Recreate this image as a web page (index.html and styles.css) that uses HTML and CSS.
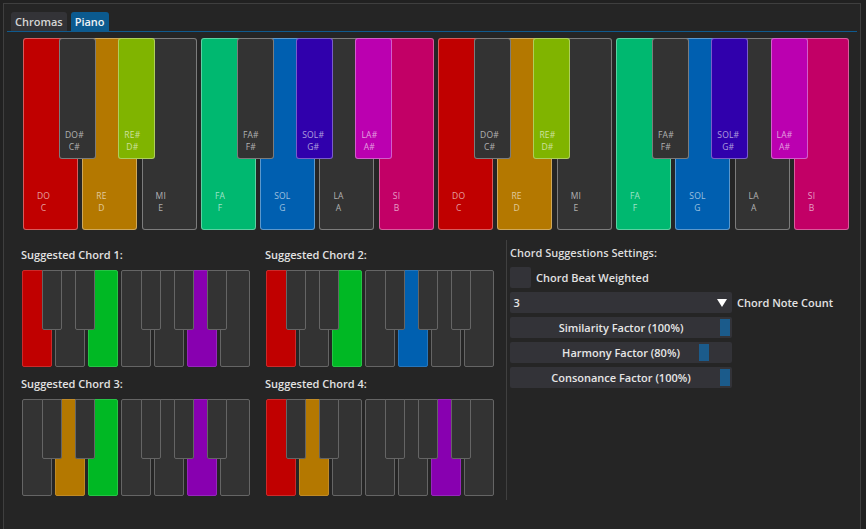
FILE: index.html
```html
<!DOCTYPE html>
<html>
<head>
<meta charset="utf-8">
<link rel="stylesheet" href="styles.css">
</head>
<body>
<div class="window">
  <div class="tabbar">
    <div class="tab">Chromas</div>
    <div class="tab active">Piano</div>
  </div>
  <div class="panel">
    <div class="piano">
      <div class="wk c-red"><div class="bk c-gray"><div class="lbl"><span>DO#</span><span>C#</span></div></div><div class="lbl"><span>DO</span><span>C</span></div></div>
      <div class="wk c-amber"><div class="bk c-lime"><div class="lbl"><span>RE#</span><span>D#</span></div></div><div class="lbl"><span>RE</span><span>D</span></div></div>
      <div class="wk c-gray"><div class="lbl"><span>MI</span><span>E</span></div></div>
      <div class="wk c-green"><div class="bk c-gray"><div class="lbl"><span>FA#</span><span>F#</span></div></div><div class="lbl"><span>FA</span><span>F</span></div></div>
      <div class="wk c-blue"><div class="bk c-indigo"><div class="lbl"><span>SOL#</span><span>G#</span></div></div><div class="lbl"><span>SOL</span><span>G</span></div></div>
      <div class="wk c-gray"><div class="bk c-magenta"><div class="lbl"><span>LA#</span><span>A#</span></div></div><div class="lbl"><span>LA</span><span>A</span></div></div>
      <div class="wk c-pink"><div class="lbl"><span>SI</span><span>B</span></div></div>
      <div class="wk c-red"><div class="bk c-gray"><div class="lbl"><span>DO#</span><span>C#</span></div></div><div class="lbl"><span>DO</span><span>C</span></div></div>
      <div class="wk c-amber"><div class="bk c-lime"><div class="lbl"><span>RE#</span><span>D#</span></div></div><div class="lbl"><span>RE</span><span>D</span></div></div>
      <div class="wk c-gray"><div class="lbl"><span>MI</span><span>E</span></div></div>
      <div class="wk c-green"><div class="bk c-gray"><div class="lbl"><span>FA#</span><span>F#</span></div></div><div class="lbl"><span>FA</span><span>F</span></div></div>
      <div class="wk c-blue"><div class="bk c-indigo"><div class="lbl"><span>SOL#</span><span>G#</span></div></div><div class="lbl"><span>SOL</span><span>G</span></div></div>
      <div class="wk c-gray"><div class="bk c-magenta"><div class="lbl"><span>LA#</span><span>A#</span></div></div><div class="lbl"><span>LA</span><span>A</span></div></div>
      <div class="wk c-pink"><div class="lbl"><span>SI</span><span>B</span></div></div>
    </div>

    <div class="bottom">
      <div class="chords">
        <div class="chord">
          <div class="chord-title">Suggested Chord 1:</div>
          <div class="mini">
            <div class="mk m-red"><div class="mb"></div></div>
            <div class="mk"><div class="mb"></div></div>
            <div class="mk m-green"></div>
            <div class="mk"><div class="mb"></div></div>
            <div class="mk"><div class="mb"></div></div>
            <div class="mk m-purple"><div class="mb"></div></div>
            <div class="mk"></div>
          </div>
        </div>
        <div class="chord">
          <div class="chord-title">Suggested Chord 2:</div>
          <div class="mini">
            <div class="mk m-red"><div class="mb"></div></div>
            <div class="mk"><div class="mb"></div></div>
            <div class="mk m-green"></div>
            <div class="mk"><div class="mb"></div></div>
            <div class="mk m-blue"><div class="mb"></div></div>
            <div class="mk"><div class="mb"></div></div>
            <div class="mk"></div>
          </div>
        </div>
        <div class="chord">
          <div class="chord-title">Suggested Chord 3:</div>
          <div class="mini">
            <div class="mk"><div class="mb"></div></div>
            <div class="mk m-amber"><div class="mb"></div></div>
            <div class="mk m-green"></div>
            <div class="mk"><div class="mb"></div></div>
            <div class="mk"><div class="mb"></div></div>
            <div class="mk m-purple"><div class="mb"></div></div>
            <div class="mk"></div>
          </div>
        </div>
        <div class="chord">
          <div class="chord-title">Suggested Chord 4:</div>
          <div class="mini">
            <div class="mk m-red"><div class="mb"></div></div>
            <div class="mk m-amber"><div class="mb"></div></div>
            <div class="mk"></div>
            <div class="mk"><div class="mb"></div></div>
            <div class="mk"><div class="mb"></div></div>
            <div class="mk m-purple"><div class="mb"></div></div>
            <div class="mk"></div>
          </div>
        </div>
      </div>
      <div class="divider"></div>
      <div class="settings">
        <div class="settings-title">Chord Suggestions Settings:</div>
        <div class="row">
          <div class="checkbox"></div>
          <span class="row-label">Chord Beat Weighted</span>
        </div>
        <div class="row">
          <div class="select">
            <span>3</span>
            <svg class="arrow" width="10" height="8" viewBox="0 0 10 8"><polygon points="0,0 10,0 5,8" fill="#ffffff"/></svg>
          </div>
          <span class="row-label">Chord Note Count</span>
        </div>
        <div class="slider"><span>Similarity Factor (100%)</span><div class="thumb" style="left:210px"></div></div>
        <div class="slider"><span>Harmony Factor (80%)</span><div class="thumb" style="left:189px"></div></div>
        <div class="slider"><span>Consonance Factor (100%)</span><div class="thumb" style="left:210px"></div></div>
      </div>
    </div>
  </div>
</div>
</body>
</html>
```

FILE: styles.css
```css
* { box-sizing: border-box; }
html, body { margin: 0; padding: 0; }
body {
  background: #212121;
  font-family: "Open Sans", "Noto Sans", sans-serif;
  font-weight: 600;
  font-size: 11px;
  color: #e0e0e0;
  overflow: hidden;
  height: 529px;
}
.window {
  margin: 3px 0 0 3px;
  width: 858px;
  height: 526px;
  border: 1px solid #3f3f3f;
  border-bottom: none;
  background: #252525;
  padding: 8px 3px 0 3px;
  overflow: hidden;
}
.tabbar {
  display: flex;
  gap: 4px;
  padding-left: 4px;
  height: 20px;
  border-bottom: 1px solid #0f5a8e;
}
.tab {
  height: 19px;
  padding: 0 4px;
  line-height: 19px;
  background: #333337;
  color: #d6d6d6;
  border-radius: 3px 3px 0 0;
}
.tab.active {
  background: #0b5a8f;
  color: #eef2f6;
}
.panel {
  padding: 6px 0 0 16px;
}
/* big piano */
.piano {
  display: grid;
  grid-template-columns: repeat(14, 55px);
  column-gap: 4.31px;
  height: 192px;
}
.wk {
  position: relative;
  border: 1px solid rgba(255,255,255,0.36);
  border-radius: 3px;
  display: flex;
  flex-direction: column;
  justify-content: flex-end;
  align-items: flex-start;
  padding: 0 0 16px 13px;
}
.bk {
  position: absolute;
  z-index: 1;
  top: -1px;
  left: 35px;
  width: 37px;
  height: 121px;
  border: 1px solid rgba(255,255,255,0.36);
  border-radius: 3px;
  display: flex;
  flex-direction: column;
  justify-content: flex-end;
  align-items: flex-start;
  padding: 0 0 6px 5px;
}
.lbl {
  display: flex;
  flex-direction: column;
  align-items: center;
  font-size: 8.5px;
  font-weight: 400;
  line-height: 11.3px;
  letter-spacing: 0.2px;
  color: rgba(255,255,255,0.62);
}
.c-red { background: #c00000; }
.c-amber { background: #b47800; }
.c-lime { background: #80b400; }
.c-gray { background: #333333; }
.c-green { background: #00b870; }
.c-blue { background: #005fb0; }
.c-indigo { background: #3000ac; }
.c-magenta { background: #bb00b0; }
.c-pink { background: #c20066; }

/* bottom */
.bottom {
  display: flex;
  align-items: flex-start;
  margin-top: 10px;
  margin-left: -16px;
}
.chords {
  display: grid;
  grid-template-columns: 229px 229px;
  align-content: start;
  column-gap: 15px;
  row-gap: 9px;
  margin-left: 15px;
  padding-top: 7px;
  width: 473px;
}
.chord {
  display: flex;
  flex-direction: column;
  gap: 8px;
}
.chord-title {
  line-height: 15px;
  margin-left: -1px;
  color: #e2e2e2;
}
.mini {
  display: grid;
  grid-template-columns: repeat(7, 30px);
  column-gap: 3px;
  height: 97px;
}
.mk {
  position: relative;
  background: #333333;
  border: 1px solid #656565;
  border-radius: 2px;
}
.mb {
  position: absolute;
  z-index: 1;
  top: -1px;
  left: 19px;
  width: 20px;
  height: 60px;
  background: #333333;
  border: 1px solid #656565;
  border-radius: 0 0 2px 2px;
}
.m-red { background: #c00000; border-color: #cc2a2a; }
.m-green { background: #00b824; border-color: #26c446; }
.m-amber { background: #b47800; border-color: #c08a26; }
.m-purple { background: #8800b0; border-color: #9626bc; }
.m-blue { background: #0060b0; border-color: #2676bc; }

.divider {
  width: 1px;
  height: 260px;
  background: #404040;
  margin-left: 11px;
}
.settings {
  padding: 5px 0 0 3px;
  display: flex;
  flex-direction: column;
  gap: 4px;
}
.settings-title {
  line-height: 15px;
  margin-bottom: 3px;
  color: #dedede;
}
.row {
  display: flex;
  align-items: center;
  gap: 5px;
  height: 21px;
}
.checkbox {
  width: 21px;
  height: 21px;
  background: #333338;
  border-radius: 2px;
}
.row-label { color: #e2e2e2; }
.select {
  width: 222px;
  height: 21px;
  background: #333338;
  border-radius: 2px;
  display: flex;
  align-items: center;
  justify-content: space-between;
  padding: 0 5px 0 3.5px;
  color: #e6e6e6;
}
.arrow { display: block; }
.slider {
  position: relative;
  width: 222px;
  height: 21px;
  background: #333338;
  border-radius: 2px;
  display: flex;
  align-items: center;
  justify-content: center;
  color: #e6e6e6;
}
.thumb {
  position: absolute;
  top: 2px;
  width: 10px;
  height: 17px;
  background: #1b5b8b;
}
```
